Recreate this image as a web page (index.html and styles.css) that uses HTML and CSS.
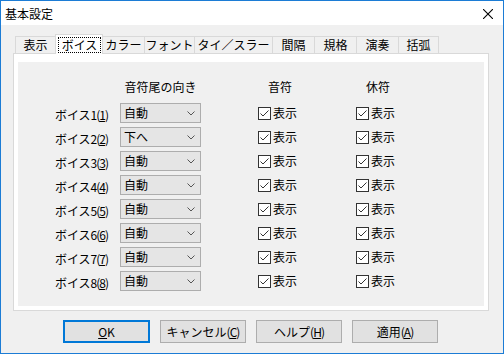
FILE: index.html
```html
<!DOCTYPE html>
<html lang="ja">
<head>
<meta charset="utf-8">
<title>基本設定</title>
<link rel="stylesheet" href="styles.css">
</head>
<body>
<div class="window">
  <div class="titlebar">
    <span class="title">基本設定</span>
    <svg class="close" width="10" height="10" viewBox="0 0 10 10"><path d="M0 0L10 10M10 0L0 10" stroke="#000" stroke-width="1.1" fill="none"/></svg>
  </div>
  <div class="client">
    <div class="tabs">
      <div class="tab tab-first">表示</div>
      <div class="tab tab-selected"><span class="focus">ボイス</span></div>
      <div class="tab w42">カラー</div>
      <div class="tab w50">フォント</div>
      <div class="tab w78">タイ／スラー</div>
      <div class="tab w42">間隔</div>
      <div class="tab w42">規格</div>
      <div class="tab w42">演奏</div>
      <div class="tab tab-last">括弧</div>
    </div>
    <div class="panel">
      <div class="page">
        <div class="grid">
          <div></div>
          <div class="hdr hdr-dir">音符尾の向き</div>
          <div class="hdr hdr-col">音符</div>
          <div class="hdr hdr-col">休符</div>

          <div class="label">ボイス<span class="num">1(<u>1</u>)</span></div>
          <div class="combo"><span>自動</span><svg class="chev" width="8" height="5" viewBox="0 0 8 5"><path d="M0.5 0.5L4 4L7.5 0.5" stroke="#555" fill="none"/></svg></div>
          <div class="check"><svg class="box" width="13" height="13" viewBox="0 0 13 13"><rect x="0.5" y="0.5" width="12" height="12" fill="#fff" stroke="#333"/><path d="M2.5 6.5L5 9L10.5 3.5" stroke="#333" fill="none"/></svg><span>表示</span></div>
          <div class="check"><svg class="box" width="13" height="13" viewBox="0 0 13 13"><rect x="0.5" y="0.5" width="12" height="12" fill="#fff" stroke="#333"/><path d="M2.5 6.5L5 9L10.5 3.5" stroke="#333" fill="none"/></svg><span>表示</span></div>

          <div class="label">ボイス<span class="num">2(<u>2</u>)</span></div>
          <div class="combo"><span>下へ</span><svg class="chev" width="8" height="5" viewBox="0 0 8 5"><path d="M0.5 0.5L4 4L7.5 0.5" stroke="#555" fill="none"/></svg></div>
          <div class="check"><svg class="box" width="13" height="13" viewBox="0 0 13 13"><rect x="0.5" y="0.5" width="12" height="12" fill="#fff" stroke="#333"/><path d="M2.5 6.5L5 9L10.5 3.5" stroke="#333" fill="none"/></svg><span>表示</span></div>
          <div class="check"><svg class="box" width="13" height="13" viewBox="0 0 13 13"><rect x="0.5" y="0.5" width="12" height="12" fill="#fff" stroke="#333"/><path d="M2.5 6.5L5 9L10.5 3.5" stroke="#333" fill="none"/></svg><span>表示</span></div>

          <div class="label">ボイス<span class="num">3(<u>3</u>)</span></div>
          <div class="combo"><span>自動</span><svg class="chev" width="8" height="5" viewBox="0 0 8 5"><path d="M0.5 0.5L4 4L7.5 0.5" stroke="#555" fill="none"/></svg></div>
          <div class="check"><svg class="box" width="13" height="13" viewBox="0 0 13 13"><rect x="0.5" y="0.5" width="12" height="12" fill="#fff" stroke="#333"/><path d="M2.5 6.5L5 9L10.5 3.5" stroke="#333" fill="none"/></svg><span>表示</span></div>
          <div class="check"><svg class="box" width="13" height="13" viewBox="0 0 13 13"><rect x="0.5" y="0.5" width="12" height="12" fill="#fff" stroke="#333"/><path d="M2.5 6.5L5 9L10.5 3.5" stroke="#333" fill="none"/></svg><span>表示</span></div>

          <div class="label">ボイス<span class="num">4(<u>4</u>)</span></div>
          <div class="combo"><span>自動</span><svg class="chev" width="8" height="5" viewBox="0 0 8 5"><path d="M0.5 0.5L4 4L7.5 0.5" stroke="#555" fill="none"/></svg></div>
          <div class="check"><svg class="box" width="13" height="13" viewBox="0 0 13 13"><rect x="0.5" y="0.5" width="12" height="12" fill="#fff" stroke="#333"/><path d="M2.5 6.5L5 9L10.5 3.5" stroke="#333" fill="none"/></svg><span>表示</span></div>
          <div class="check"><svg class="box" width="13" height="13" viewBox="0 0 13 13"><rect x="0.5" y="0.5" width="12" height="12" fill="#fff" stroke="#333"/><path d="M2.5 6.5L5 9L10.5 3.5" stroke="#333" fill="none"/></svg><span>表示</span></div>

          <div class="label">ボイス<span class="num">5(<u>5</u>)</span></div>
          <div class="combo"><span>自動</span><svg class="chev" width="8" height="5" viewBox="0 0 8 5"><path d="M0.5 0.5L4 4L7.5 0.5" stroke="#555" fill="none"/></svg></div>
          <div class="check"><svg class="box" width="13" height="13" viewBox="0 0 13 13"><rect x="0.5" y="0.5" width="12" height="12" fill="#fff" stroke="#333"/><path d="M2.5 6.5L5 9L10.5 3.5" stroke="#333" fill="none"/></svg><span>表示</span></div>
          <div class="check"><svg class="box" width="13" height="13" viewBox="0 0 13 13"><rect x="0.5" y="0.5" width="12" height="12" fill="#fff" stroke="#333"/><path d="M2.5 6.5L5 9L10.5 3.5" stroke="#333" fill="none"/></svg><span>表示</span></div>

          <div class="label">ボイス<span class="num">6(<u>6</u>)</span></div>
          <div class="combo"><span>自動</span><svg class="chev" width="8" height="5" viewBox="0 0 8 5"><path d="M0.5 0.5L4 4L7.5 0.5" stroke="#555" fill="none"/></svg></div>
          <div class="check"><svg class="box" width="13" height="13" viewBox="0 0 13 13"><rect x="0.5" y="0.5" width="12" height="12" fill="#fff" stroke="#333"/><path d="M2.5 6.5L5 9L10.5 3.5" stroke="#333" fill="none"/></svg><span>表示</span></div>
          <div class="check"><svg class="box" width="13" height="13" viewBox="0 0 13 13"><rect x="0.5" y="0.5" width="12" height="12" fill="#fff" stroke="#333"/><path d="M2.5 6.5L5 9L10.5 3.5" stroke="#333" fill="none"/></svg><span>表示</span></div>

          <div class="label">ボイス<span class="num">7(<u>7</u>)</span></div>
          <div class="combo"><span>自動</span><svg class="chev" width="8" height="5" viewBox="0 0 8 5"><path d="M0.5 0.5L4 4L7.5 0.5" stroke="#555" fill="none"/></svg></div>
          <div class="check"><svg class="box" width="13" height="13" viewBox="0 0 13 13"><rect x="0.5" y="0.5" width="12" height="12" fill="#fff" stroke="#333"/><path d="M2.5 6.5L5 9L10.5 3.5" stroke="#333" fill="none"/></svg><span>表示</span></div>
          <div class="check"><svg class="box" width="13" height="13" viewBox="0 0 13 13"><rect x="0.5" y="0.5" width="12" height="12" fill="#fff" stroke="#333"/><path d="M2.5 6.5L5 9L10.5 3.5" stroke="#333" fill="none"/></svg><span>表示</span></div>

          <div class="label">ボイス<span class="num">8(<u>8</u>)</span></div>
          <div class="combo"><span>自動</span><svg class="chev" width="8" height="5" viewBox="0 0 8 5"><path d="M0.5 0.5L4 4L7.5 0.5" stroke="#555" fill="none"/></svg></div>
          <div class="check"><svg class="box" width="13" height="13" viewBox="0 0 13 13"><rect x="0.5" y="0.5" width="12" height="12" fill="#fff" stroke="#333"/><path d="M2.5 6.5L5 9L10.5 3.5" stroke="#333" fill="none"/></svg><span>表示</span></div>
          <div class="check"><svg class="box" width="13" height="13" viewBox="0 0 13 13"><rect x="0.5" y="0.5" width="12" height="12" fill="#fff" stroke="#333"/><path d="M2.5 6.5L5 9L10.5 3.5" stroke="#333" fill="none"/></svg><span>表示</span></div>
        </div>
      </div>
    </div>
    <div class="buttons">
      <div class="btn btn-default"><span><u>O</u>K</span></div>
      <div class="btn">キャンセル<span class="num">(<u>C</u>)</span></div>
      <div class="btn">ヘルプ<span class="num">(<u>H</u>)</span></div>
      <div class="btn">適用<span class="num">(<u>A</u>)</span></div>
    </div>
  </div>
</div>
</body>
</html>
```

FILE: styles.css
```css
* {
  box-sizing: border-box;
}

html, body {
  margin: 0;
  padding: 0;
  background: #f0f0f0;
}

body {
  font-family: "Noto Sans CJK JP", "Noto Sans", sans-serif;
  font-size: 12px;
  color: #000;
}

.window {
  width: 504px;
  height: 354px;
  border: 1px solid #1c7cd5;
  display: flex;
  flex-direction: column;
  background: #f0f0f0;
}

.titlebar {
  height: 24px;
  background: #fff;
  display: flex;
  justify-content: space-between;
  align-items: flex-start;
  padding-left: 4px;
  padding-right: 10px;
}

.title {
  line-height: 20px;
  padding-top: 3px;
}

.close {
  margin-top: 8px;
}

.client {
  flex: 1;
  padding-top: 9px;
}

.tabs {
  display: flex;
  align-items: flex-end;
  margin-left: 14px;
  height: 19px;
}

.tab {
  height: 17px;
  border-top: 1px solid #d9d9d9;
  border-left: 1px solid #d9d9d9;
  background: #f0f0f0;
  display: flex;
  align-items: center;
  justify-content: center;
  line-height: 16px;
  white-space: nowrap;
}

.tab-first {
  width: 40px;
}

.w42 {
  width: 42px;
}

.w50 {
  width: 50px;
}

.w78 {
  width: 78px;
}

.tab-last {
  width: 41px;
  border-right: 1px solid #d9d9d9;
}

.tab-selected {
  width: 48px;
  height: 20px;
  margin-bottom: -1px;
  margin-right: -1px;
  background: #fff;
  border-right: 1px solid #d9d9d9;
  padding: 2px 1px 1px 2px;
  align-items: stretch;
  position: relative;
  z-index: 1;
}

.focus {
  flex: 1;
  border: 1px dotted #000;
  display: flex;
  align-items: center;
  justify-content: center;
  line-height: 14px;
}

.panel {
  margin-left: 12px;
  width: 476px;
  height: 258px;
  border: 1px solid #d9d9d9;
  background: #fff;
  padding: 8px 4px 4px 4px;
}

.page {
  height: 100%;
  background: #f0f0f0;
}

.grid {
  display: grid;
  grid-template-columns: 102px 138px 98px 1fr;
  grid-template-rows: 22px;
  grid-auto-rows: 20px;
  row-gap: 4px;
  padding-top: 15px;
}

.hdr {
  line-height: 20px;
  white-space: nowrap;
}

.hdr-dir {
  width: 81px;
  text-align: center;
}

.hdr-col {
  padding-left: 10px;
}

.label {
  text-align: right;
  padding-right: 12px;
  line-height: 20px;
  padding-top: 2px;
  white-space: nowrap;
}

.num {
  letter-spacing: -1px;
}

.label u,
.btn u {
  text-underline-offset: 1px;
}

.combo {
  width: 81px;
  height: 20px;
  border: 1px solid #adadad;
  background: #e5e5e5;
  display: flex;
  align-items: center;
  justify-content: space-between;
  padding: 0 5px 0 3px;
  line-height: 18px;
}

.chev {
  display: block;
}

.check {
  display: flex;
  align-items: center;
  gap: 2px;
  line-height: 20px;
}

.box {
  display: block;
  flex: none;
}

.buttons {
  display: flex;
  gap: 10px;
  margin-top: 9px;
  margin-left: 62px;
}

.btn {
  width: 86px;
  height: 23px;
  border: 1px solid #adadad;
  background: #e1e1e1;
  display: flex;
  align-items: center;
  justify-content: center;
  line-height: 16px;
  white-space: nowrap;
}

.btn-default {
  width: 87px;
  border: 2px solid #0078d7;
}
```
